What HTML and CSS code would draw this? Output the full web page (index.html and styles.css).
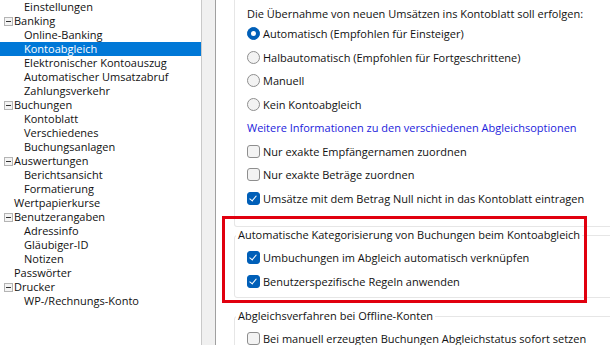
FILE: index.html
```html
<html>
<head>
  <meta charset="UTF-8">
  <title>Optionen - Kontoabgleich</title>
  <link rel="stylesheet" href="styles.css">
</head>
<body>
  <div class="window">
    <ul class="tree">
      <li class="node child">Einstellungen</li>
      <li class="node parent"><span class="expander"></span>Banking</li>
      <li class="node child">Online-Banking</li>
      <li class="node child selected">Kontoabgleich</li>
      <li class="node child">Elektronischer Kontoauszug</li>
      <li class="node child">Automatischer Umsatzabruf</li>
      <li class="node child">Zahlungsverkehr</li>
      <li class="node parent"><span class="expander"></span>Buchungen</li>
      <li class="node child">Kontoblatt</li>
      <li class="node child">Verschiedenes</li>
      <li class="node child">Buchungsanlagen</li>
      <li class="node parent"><span class="expander"></span>Auswertungen</li>
      <li class="node child">Berichtsansicht</li>
      <li class="node child">Formatierung</li>
      <li class="node leaf">Wertpapierkurse</li>
      <li class="node parent"><span class="expander"></span>Benutzerangaben</li>
      <li class="node child">Adressinfo</li>
      <li class="node child">Gläubiger-ID</li>
      <li class="node child">Notizen</li>
      <li class="node leaf">Passwörter</li>
      <li class="node parent"><span class="expander"></span>Drucker</li>
      <li class="node child">WP-/Rechnungs-Konto</li>
    </ul>

    <div class="splitter"></div>

    <div class="content">
      <div class="group group-open">
        <div class="row heading">Die Übernahme von neuen Umsätzen ins Kontoblatt soll erfolgen:</div>
        <label class="row"><span class="radio on"></span>Automatisch (Empfohlen für Einsteiger)</label>
        <label class="row"><span class="radio"></span>Halbautomatisch (Empfohlen für Fortgeschrittene)</label>
        <label class="row"><span class="radio"></span>Manuell</label>
        <label class="row"><span class="radio"></span>Kein Kontoabgleich</label>
        <div class="row"><a class="link" href="#">Weitere Informationen zu den verschiedenen Abgleichsoptionen</a></div>
        <label class="row"><span class="check"></span>Nur exakte Empfängernamen zuordnen</label>
        <label class="row"><span class="check"></span>Nur exakte Beträge zuordnen</label>
        <label class="row"><span class="check on"></span>Umsätze mit dem Betrag Null nicht in das Kontoblatt eintragen</label>
      </div>

      <fieldset class="group">
        <legend>Automatische Kategorisierung von Buchungen beim Kontoabgleich</legend>
        <label class="row"><span class="check on"></span>Umbuchungen im Abgleich automatisch verknüpfen</label>
        <label class="row"><span class="check on"></span>Benutzerspezifische Regeln anwenden</label>
      </fieldset>

      <fieldset class="group group-last">
        <legend>Abgleichsverfahren bei Offline-Konten</legend>
        <label class="row"><span class="check"></span>Bei manuell erzeugten Buchungen Abgleichstatus sofort setzen</label>
      </fieldset>

      <div class="highlight"></div>
    </div>
  </div>
</body>
</html>
```

FILE: styles.css
```css
body {
    margin: 0;
    padding: 0;
    font-family: 'Open Sans', 'Noto Sans', sans-serif;
    font-size: 11px;
    color: #111111;
    background-color: #ffffff;
    overflow: hidden;
}

.window {
    display: flex;
    height: 345px;
    width: 610px;
    overflow: hidden;
}

/* Tree */
.tree {
    list-style: none;
    margin: 0;
    padding: 0;
    width: 201px;
    flex-shrink: 0;
    border-right: 1px solid #c9c9c9;
    background-color: #ffffff;
}

.node {
    height: 14px;
    line-height: 14px;
    white-space: nowrap;
    display: flex;
    align-items: center;
}

.node.child {
    padding-left: 24px;
}

.node.leaf {
    padding-left: 14px;
}

.node.parent {
    padding-left: 4px;
}

.node.selected {
    background-color: #0078d7;
    color: #ffffff;
}

.expander {
    width: 7px;
    height: 7px;
    border: 1px solid #b4b4b4;
    background-color: #f4f4f4;
    margin-right: 1px;
    position: relative;
}

.expander::after {
    content: "";
    position: absolute;
    left: 1px;
    top: 3px;
    width: 5px;
    height: 1px;
    background-color: #333333;
}

/* Splitter */
.splitter {
    width: 13px;
    flex-shrink: 0;
    background-color: #f0f0f0;
    border-right: 1px solid #a0a0a0;
}

/* Options panel */
.content {
    flex: 1;
    position: relative;
    background-color: #ffffff;
    padding-left: 18px;
    min-width: 0;
}

.group {
    width: 420px;
    border: 1px solid #e6e6e6;
    border-radius: 3px;
    margin: 0;
    padding: 2px 0 4px 1px;
    min-width: 0;
}

.group legend {
    padding: 0 2px;
    height: 16px;
    line-height: 16px;
}

.group-open {
    border-top: none;
    border-top-left-radius: 0;
    border-top-right-radius: 0;
    padding: 0 0 16px 12px;
}

.group-last {
    margin-top: 10px;
    height: 60px;
}

.row {
    display: flex;
    align-items: center;
    height: 23.5px;
    white-space: nowrap;
}

.group .row {
    height: 24px;
    padding-left: 11px;
}

.group-open .row {
    height: 23.5px;
    padding-left: 0;
}

.group-open .heading {
    height: 22px;
    padding-top: 4px;
    box-sizing: border-box;
}

.link {
    color: #1c1cdc;
    text-decoration: none;
}

/* Radio buttons */
.radio {
    width: 11px;
    height: 11px;
    border: 1px solid #8e8e8e;
    border-radius: 50%;
    background-color: #f3f3f3;
    margin-right: 3px;
    flex-shrink: 0;
    position: relative;
}

.radio.on {
    background-color: #005fb8;
    border-color: #005fb8;
}

.radio.on::after {
    content: "";
    position: absolute;
    left: 3px;
    top: 3px;
    width: 5px;
    height: 5px;
    border-radius: 50%;
    background-color: #ffffff;
}

/* Checkboxes */
.check {
    width: 11px;
    height: 11px;
    border: 1px solid #8e8e8e;
    border-radius: 3px;
    background-color: #f3f3f3;
    margin-right: 3px;
    flex-shrink: 0;
    position: relative;
}

.check.on {
    background-color: #005fb8;
    border-color: #005fb8;
}

.check.on::after {
    content: "";
    position: absolute;
    left: 3px;
    top: 1px;
    width: 3px;
    height: 6px;
    border: solid #ffffff;
    border-width: 0 1px 1px 0;
    transform: rotate(40deg);
}

/* Red annotation frame */
.highlight {
    position: absolute;
    left: 6px;
    top: 216px;
    width: 359px;
    height: 81px;
    border: 3px solid #e1000f;
}
```
